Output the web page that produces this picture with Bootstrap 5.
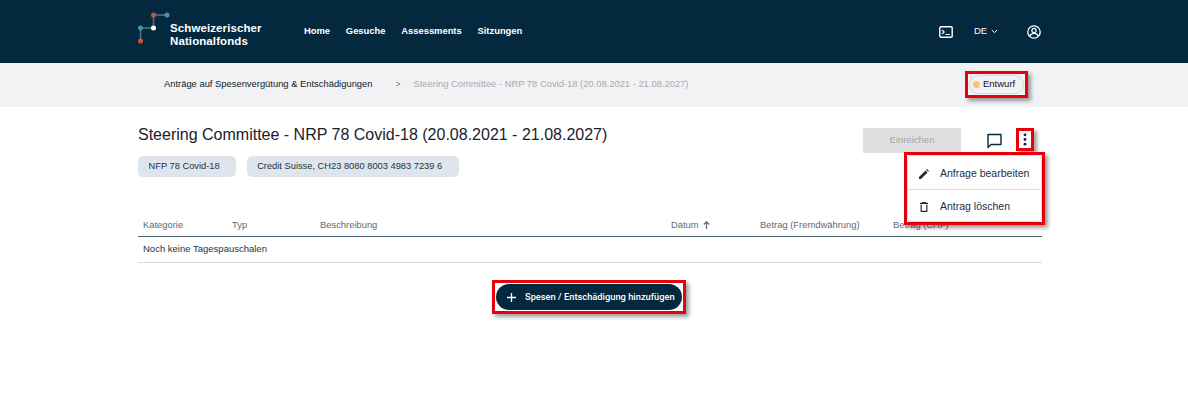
<!DOCTYPE html>
<html lang="de">
<head>
<meta charset="utf-8">
<title>Steering Committee</title>
<link rel="stylesheet" href="https://cdn.jsdelivr.net/npm/bootstrap@5.3.0/dist/css/bootstrap.min.css">
<style>
body{font-family:"Liberation Sans",Arial,sans-serif;background:#fff;color:#04293f;height:420px;overflow:hidden}
.shell{width:904px;margin-left:138px}
.topbar{background:#04293f;height:63px}
.logo-mark{width:34px;height:36px;flex:none;margin-top:-6px}
.logo-text{color:#fff;font-weight:700;font-size:11.5px;line-height:12.5px;letter-spacing:.1px;margin-left:-2px;margin-top:6px}
.brand-wrap{width:166px}
.mainlink{color:#fff;font-size:9.4px;font-weight:700;text-decoration:none;margin-right:15.8px;margin-top:-1px}
.tool-wrap{color:#fff;font-size:10px}
.lang{width:33px;margin:0 20px 0 21px;font-size:9.5px}
.user-ico{flex:none;margin-right:1px}
.crumbbar{background:#f2f2f4;height:44px;font-size:9.4px}
.crumb-in{padding-bottom:1px}
.crumb1{color:#0c1c28;margin-left:26px}
.crumbsep{color:#777;margin:0 13px 0 23px;font-size:8.5px}
.crumb2{color:#a7abb0}
.mark-red{border:3px solid #e8000b;box-shadow:3px 3px 4px rgba(0,0,0,.38)}
.status-box{position:absolute;left:827px;top:8px;width:63px;height:27px;padding:1px}
.status-pill{height:100%;border:1px solid #d6d6d8;border-radius:11px;padding-left:3px;font-size:9.5px;color:#111;gap:3px}
.status-dot{width:7px;height:7px;border-radius:50%;background:#fcc474}
.page-title{font-size:16px;font-weight:400;color:#17232c;margin:0;line-height:20px}
.head-row{padding-top:18px;height:49px}
.tagbox{background:#dfe5ec;color:#24323d;font-size:9.3px;height:21px;border-radius:5px;padding:0 16.5px 0 10.5px}
.tag-row{gap:10.5px}
.send-btn{position:absolute;left:725px;top:21px;width:98px;height:25px;background:#e0e0e0;color:#a2a2a2;font-size:9.5px;border:0;border-radius:0;padding:0}
.chat-ico{position:absolute;left:848px;top:25px;width:17px;height:17px}
.dots-box{position:absolute;left:878px;top:21px;width:18px;height:23px}
.menu-box{position:absolute;left:766px;top:45px;width:141px;height:73px;z-index:5;padding:1px;background:#fff}
.menu-in{height:100%;border-radius:4px;box-shadow:0 0 3px rgba(0,0,0,.4);background:#fff;font-size:10.5px;color:#19303f}
.menu-row{height:33px;padding:2px 0 0 11px;gap:11px}
.menu-row+.menu-row{border-top:1px solid #ddd;padding-top:1px}
.grid-head{margin-top:36px;height:24px;padding-top:1px;border-bottom:1px solid #4a6473;font-size:9.4px;color:#5d6a73}
.cell1{width:94px;padding-left:5px}.cell2{width:88px}.cell3{width:351px}.cell4{width:89px}.cell5{width:133px}
.empty-row{height:26px;border-bottom:1px solid #dcdcd8;font-size:9.5px;color:#28343d;padding-left:5px}
.add-box{width:194px;height:34px;margin:17px 0 0 354px;padding:1px}
.add-btn{width:100%;height:100%;background:#04293f;color:#fff;border:0;border-radius:13px;font-family:Roboto,"Liberation Sans",sans-serif;font-size:9.3px;font-weight:500;padding:0 0 0 11px;gap:9px;white-space:nowrap}
.add-btn svg{flex:none}
.add-btn:hover{background:#04293f;color:#fff}
</style>
</head>
<body>
<nav class="topbar d-flex align-items-center">
  <div class="shell d-flex align-items-center">
    <div class="brand-wrap d-flex align-items-center">
      <svg class="logo-mark" viewBox="0 0 34 36" aria-hidden="true">
        <path d="M2.500 30V17H15.500V4H29" fill="none" stroke="#5c7282" stroke-width="1.500"/>
        <circle cx="2.500" cy="17" r="2.500" fill="#4b8fb5"/>
        <circle cx="2.500" cy="30" r="2.500" fill="#c4573c"/>
        <circle cx="15.500" cy="17" r="2.500" fill="#fff"/>
        <circle cx="15.500" cy="4" r="2.500" fill="#c4573c"/>
        <circle cx="29" cy="4" r="2.500" fill="#4b8fb5"/>
      </svg>
      <div class="logo-text">Schweizerischer<br>Nationalfonds</div>
    </div>
    <a class="mainlink" href="#">Home</a>
    <a class="mainlink" href="#">Gesuche</a>
    <a class="mainlink" href="#">Assessments</a>
    <a class="mainlink" href="#">Sitzungen</a>
    <div class="tool-wrap d-flex align-items-center ms-auto">
      <svg width="14" height="12" viewBox="0 0 14 12" aria-hidden="true"><rect x=".8" y=".8" width="12.400" height="10.400" rx="1.200" fill="none" stroke="#fff" stroke-width="1.400"/><path d="M3 4l2.200 2L3 8M6.500 8.500H11" fill="none" stroke="#fff" stroke-width="1.100"/></svg>
      <div class="lang d-flex align-items-center gap-1">DE
        <svg width="7" height="5" viewBox="0 0 7 5" aria-hidden="true"><path d="M.8 1l2.700 2.600L6.200 1" fill="none" stroke="#fff" stroke-width="1"/></svg>
      </div>
      <svg width="14" height="14" viewBox="0 0 14 14" class="user-ico" aria-hidden="true"><circle cx="7" cy="7" r="6.200" fill="none" stroke="#fff" stroke-width="1.300"/><circle cx="7" cy="5.400" r="2.100" fill="none" stroke="#fff" stroke-width="1.200"/><path d="M3 11c.6-2 2.200-2.600 4-2.600s3.400.6 4 2.600" fill="none" stroke="#fff" stroke-width="1.200"/></svg>
    </div>
  </div>
</nav>
<div class="crumbbar">
  <div class="shell crumb-in position-relative d-flex align-items-center h-100">
    <span class="crumb1">Anträge auf Spesenvergütung &amp; Entschädigungen</span>
    <span class="crumbsep">&gt;</span>
    <span class="crumb2">Steering Committee - NRP 78 Covid-18 (20.08.2021 - 21.08.2027)</span>
    <div class="status-box mark-red"><div class="status-pill d-flex align-items-center"><span class="status-dot"></span>Entwurf</div></div>
  </div>
</div>
<main class="shell position-relative">
  <div class="head-row"><h1 class="page-title">Steering Committee - NRP 78 Covid-18 (20.08.2021 - 21.08.2027)</h1></div>
  <div class="tag-row d-flex">
    <div class="tagbox d-flex align-items-center">NFP 78 Covid-18</div>
    <div class="tagbox d-flex align-items-center">Credit Suisse, CH23 8080 8003 4983 7239 6</div>
  </div>
  <button class="send-btn btn" type="button">Einreichen</button>
  <svg class="chat-ico" viewBox="0 0 17 17" aria-hidden="true"><path d="M2 2.500H15V12.500H5L2 15.500Z" fill="none" stroke="#04293f" stroke-width="1.400" stroke-linejoin="round"/></svg>
  <div class="dots-box mark-red d-flex align-items-center justify-content-center">
    <svg width="4" height="13" viewBox="0 0 4 13" aria-hidden="true"><circle cx="2" cy="1.800" r="1.400" fill="#04293f"/><circle cx="2" cy="6.500" r="1.400" fill="#04293f"/><circle cx="2" cy="11.200" r="1.400" fill="#04293f"/></svg>
  </div>
  <div class="menu-box mark-red">
    <div class="menu-in">
      <div class="menu-row d-flex align-items-center">
        <svg width="10" height="10" viewBox="0 0 10 10" aria-hidden="true"><path d="M0 10V8L6.500 1.500 8.500 3.500 2 10ZM7.200.8 8 0 10 2 9.200 2.800Z" fill="#19303f"/></svg>
        <span>Anfrage bearbeiten</span>
      </div>
      <div class="menu-row d-flex align-items-center">
        <svg width="10" height="10" viewBox="0 0 10 10" aria-hidden="true"><path d="M1 1.300H9M3 .5H7M2.200 2.500V9.300H7.800V2.500" fill="none" stroke="#19303f" stroke-width="1.200"/></svg>
        <span>Antrag löschen</span>
      </div>
    </div>
  </div>
  <div class="grid-head d-flex align-items-center">
    <div class="cell1">Kategorie</div>
    <div class="cell2">Typ</div>
    <div class="cell3">Beschreibung</div>
    <div class="cell4 d-flex align-items-center gap-1">Datum
      <svg width="7" height="8" viewBox="0 0 7 8" aria-hidden="true"><path d="M3.500 8V1M.8 3.500 3.500.8 6.200 3.500" fill="none" stroke="#5d6a73" stroke-width="1.200"/></svg>
    </div>
    <div class="cell5">Betrag (Fremdwährung)</div>
    <div>Betrag (CHF)</div>
  </div>
  <div class="empty-row d-flex align-items-center">Noch keine Tagespauschalen</div>
  <div class="add-box mark-red">
    <button class="add-btn btn d-flex align-items-center" type="button">
      <svg width="9" height="9" viewBox="0 0 9 9" aria-hidden="true"><path d="M4.500 0V9M0 4.500H9" stroke="#fff" stroke-width="1.300"/></svg>
      Spesen / Entschädigung hinzufügen
    </button>
  </div>
</main>
<script src="https://cdn.jsdelivr.net/npm/bootstrap@5.3.0/dist/js/bootstrap.bundle.min.js"></script>
</body>
</html>
